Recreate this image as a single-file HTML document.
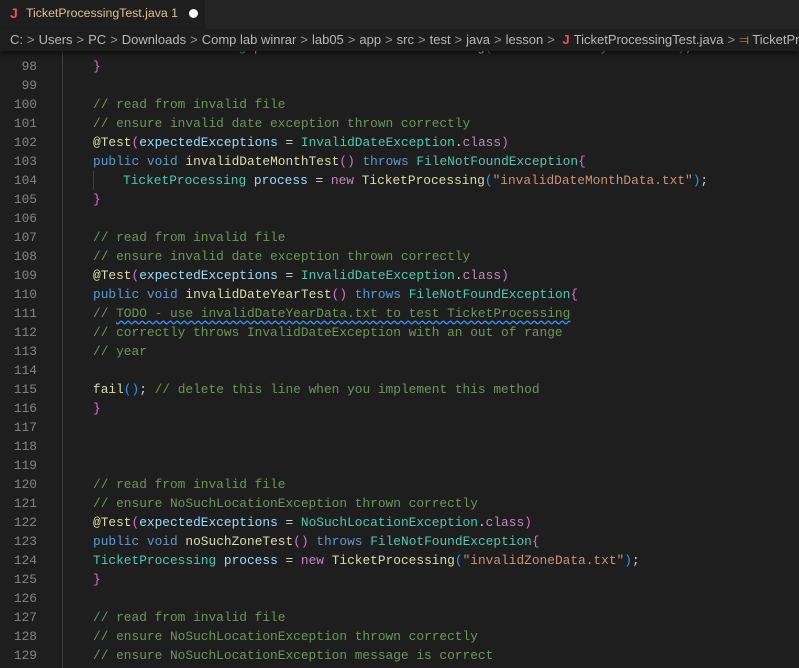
<!DOCTYPE html>
<html><head><meta charset="utf-8"><style>
*{margin:0;padding:0;box-sizing:border-box}
html,body{width:799px;height:668px;overflow:hidden}
body{background:#1e1e1e;position:relative;font-family:"Liberation Sans",sans-serif}
.tabs{position:absolute;left:0;top:0;width:799px;height:29px;background:#252526}
.tab{position:absolute;left:0;top:0;width:205px;height:29px;background:#1e1e1e}
.tab .j{position:absolute;left:10px;top:5px;color:#e8505b;font-weight:bold;font-size:14px}
.tab .t{position:absolute;left:26px;top:6px;color:#e2c08d;font-size:12.3px;white-space:nowrap}
.tab .dot{position:absolute;left:189px;top:9px;width:9px;height:9px;border-radius:50%;background:#fff}
.bc{position:absolute;left:0;top:29px;width:799px;height:22px;background:#1e1e1e;color:#b8b8b8;font-size:13px;white-space:nowrap;padding-left:10px;line-height:22px;box-shadow:0 3px 4px rgba(0,0,0,.55);z-index:2;overflow:hidden}
.bc .s{color:#9a9a9a;margin:0 4px}
.bc .j{color:#e8505b;font-weight:bold;margin-right:4px}
.bc .o{color:#ee9d28}
.code{position:absolute;left:0;top:37.5px;width:799px;font-family:"Liberation Mono",monospace;font-size:12.83px;line-height:19px}
.l{height:19px;position:relative;white-space:pre}
.n{position:absolute;left:0;width:37px;text-align:right;color:#858585}
.c{position:absolute;left:93px;color:#d4d4d4}
.g{position:absolute;left:62px;top:37px;width:1px;height:640px;background:#404040}
.g2{position:absolute;left:93px;width:1px;height:19px;background:#404040}
.cm{color:#6a9955}.k{color:#569cd6}.f{color:#dcdcaa}.cl{color:#4ec9b0}.v{color:#9cdcfe}.s{color:#ce9178}.p{color:#c586c0}
.b1{color:#da70d6}.b2{color:#179fff}.b0{color:#ffd700}
.sq{text-decoration:underline wavy #3794ff;text-underline-offset:3px}
</style></head><body>
<div class="tabs"><div class="tab"><span class="j">J</span><span class="t">TicketProcessingTest.java 1</span><span class="dot"></span></div></div>
<div class="bc">C:<span class="s">&gt;</span>Users<span class="s">&gt;</span>PC<span class="s">&gt;</span>Downloads<span class="s">&gt;</span>Comp lab winrar<span class="s">&gt;</span>lab05<span class="s">&gt;</span>app<span class="s">&gt;</span>src<span class="s">&gt;</span>test<span class="s">&gt;</span>java<span class="s">&gt;</span>lesson<span class="s">&gt;</span> <span class="j">J</span>TicketProcessingTest.java<span class="s">&gt;</span><span class="o">&#x2AE4;</span> TicketProcessingTest</div>
<div class="g"></div>
<div class="code"><div class="l"><span class="n">97</span><span class="c" style="left:123px"><span class="cl">TicketProcessing</span> <span class="v">process</span> = <span class="p">new</span> <span class="f">TicketProcessing</span><span class="b2">(</span><span class="s">"invalidDateDayData.txt"</span><span class="b2">)</span>;</span></div><div class="l"><span class="n">98</span><span class="c"><span class="b1">}</span></span></div><div class="l"><span class="n">99</span></div><div class="l"><span class="n">100</span><span class="c cm">// read from invalid file</span></div><div class="l"><span class="n">101</span><span class="c cm">// ensure invalid date exception thrown correctly</span></div><div class="l"><span class="n">102</span><span class="c"><span class="f">@Test</span><span class="b1">(</span><span class="v">expectedExceptions</span> = <span class="cl">InvalidDateException</span>.<span class="p">class</span><span class="b1">)</span></span></div><div class="l"><span class="n">103</span><span class="c"><span class="k">public</span> <span class="k">void</span> <span class="f">invalidDateMonthTest</span><span class="b1">()</span> <span class="k">throws</span> <span class="cl">FileNotFoundException</span><span class="b1">{</span></span></div><div class="l"><span class="n">104</span><span class="g2"></span><span class="c" style="left:123px"><span class="cl">TicketProcessing</span> <span class="v">process</span> = <span class="p">new</span> <span class="f">TicketProcessing</span><span class="b2">(</span><span class="s">"invalidDateMonthData.txt"</span><span class="b2">)</span>;</span></div><div class="l"><span class="n">105</span><span class="c"><span class="b1">}</span></span></div><div class="l"><span class="n">106</span></div><div class="l"><span class="n">107</span><span class="c cm">// read from invalid file</span></div><div class="l"><span class="n">108</span><span class="c cm">// ensure invalid date exception thrown correctly</span></div><div class="l"><span class="n">109</span><span class="c"><span class="f">@Test</span><span class="b1">(</span><span class="v">expectedExceptions</span> = <span class="cl">InvalidDateException</span>.<span class="p">class</span><span class="b1">)</span></span></div><div class="l"><span class="n">110</span><span class="c"><span class="k">public</span> <span class="k">void</span> <span class="f">invalidDateYearTest</span><span class="b1">()</span> <span class="k">throws</span> <span class="cl">FileNotFoundException</span><span class="b1">{</span></span></div><div class="l"><span class="n">111</span><span class="c cm">// <span class="sq">TODO - use invalidDateYearData.txt to test TicketProcessing</span></span></div><div class="l"><span class="n">112</span><span class="c cm">// correctly throws InvalidDateException with an out of range</span></div><div class="l"><span class="n">113</span><span class="c cm">// year</span></div><div class="l"><span class="n">114</span></div><div class="l"><span class="n">115</span><span class="c"><span class="f">fail</span><span class="b2">()</span>; <span class="cm">// delete this line when you implement this method</span></span></div><div class="l"><span class="n">116</span><span class="c"><span class="b1">}</span></span></div><div class="l"><span class="n">117</span></div><div class="l"><span class="n">118</span></div><div class="l"><span class="n">119</span></div><div class="l"><span class="n">120</span><span class="c cm">// read from invalid file</span></div><div class="l"><span class="n">121</span><span class="c cm">// ensure NoSuchLocationException thrown correctly</span></div><div class="l"><span class="n">122</span><span class="c"><span class="f">@Test</span><span class="b1">(</span><span class="v">expectedExceptions</span> = <span class="cl">NoSuchLocationException</span>.<span class="p">class</span><span class="b1">)</span></span></div><div class="l"><span class="n">123</span><span class="c"><span class="k">public</span> <span class="k">void</span> <span class="f">noSuchZoneTest</span><span class="b1">()</span> <span class="k">throws</span> <span class="cl">FileNotFoundException</span><span class="b1">{</span></span></div><div class="l"><span class="n">124</span><span class="c"><span class="cl">TicketProcessing</span> <span class="v">process</span> = <span class="p">new</span> <span class="f">TicketProcessing</span><span class="b2">(</span><span class="s">"invalidZoneData.txt"</span><span class="b2">)</span>;</span></div><div class="l"><span class="n">125</span><span class="c"><span class="b1">}</span></span></div><div class="l"><span class="n">126</span></div><div class="l"><span class="n">127</span><span class="c cm">// read from invalid file</span></div><div class="l"><span class="n">128</span><span class="c cm">// ensure NoSuchLocationException thrown correctly</span></div><div class="l"><span class="n">129</span><span class="c cm">// ensure NoSuchLocationException message is correct</span></div></div>
</body></html>
